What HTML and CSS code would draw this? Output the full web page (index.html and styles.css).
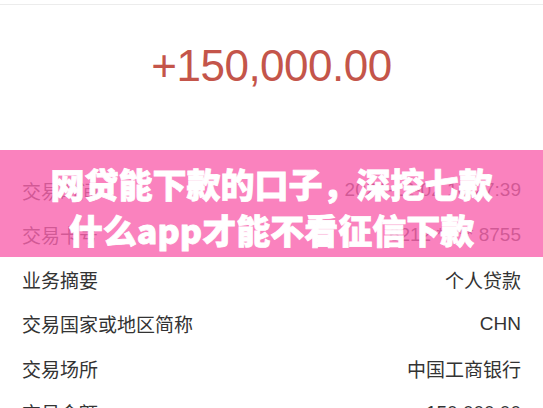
FILE: index.html
```html
<!DOCTYPE html>
<html lang="zh-CN">
<head>
  <meta charset="UTF-8" />
  <meta name="viewport" content="width=device-width, initial-scale=1" />
  <title>交易详情</title>
  <link rel="stylesheet" href="styles.css">
</head>
<body>
  <div class="page">
    <div class="top-bar"></div>

    <div class="amount">+150,000.00</div>

    <div class="detail-list">
      <div class="row"><span class="label">交易时间</span><span class="value">2024-12-02 10:27:39</span></div>
      <div class="row"><span class="label">交易卡号</span><span class="value">6212 ***** 8755</span></div>
      <div class="row"><span class="label">业务摘要</span><span class="value">个人贷款</span></div>
      <div class="row"><span class="label">交易国家或地区简称</span><span class="value">CHN</span></div>
      <div class="row"><span class="label">交易场所</span><span class="value">中国工商银行</span></div>
      <div class="row"><span class="label">交易金额</span><span class="value">150,000.00</span></div>
    </div>

    <!-- 标题横幅，盖在列表上面 -->
    <div class="banner">
      <div class="banner-title">网贷能下款的口子，深挖七款</div>
      <div class="banner-title">什么app才能不看征信下款</div>
    </div>
  </div>
</body>
</html>
```

FILE: styles.css
```css
body {
  margin: 0;
  background: #fff;
  font-family: "Liberation Sans", "Noto Sans CJK SC", sans-serif;
  color: #333;
  overflow: hidden;
}
.page {
  position: relative;
  width: 543px;
  height: 408px;
  overflow: hidden;
}
.top-bar {
  height: 4px;
  border-bottom: 1px solid #ececec;
}
.amount {
  padding: 36px 0 77px;
  height: 50px;
  line-height: 50px;
  text-align: center;
  font-size: 44px;
  letter-spacing: -0.5px;
  color: #c4554a;
}
.detail-list {
  padding: 0 22px;
}
.row {
  display: flex;
  justify-content: space-between;
  align-items: center;
  height: 44.5px;
  font-size: 19px;
}
.value {
  color: #333;
}
.banner {
  position: absolute;
  left: 0;
  right: 0;
  top: 150px;
  height: 107px;
  box-sizing: border-box;
  padding-top: 11px;
  background: rgba(249, 99, 174, 0.8);
  text-align: center;
}
.banner-title {
  font-family: "Noto Sans CJK SC", sans-serif;
  font-weight: 900;
  font-size: 34px;
  line-height: 46px;
  color: #fff;
  -webkit-text-stroke: 0.8px #fff;
}
```
